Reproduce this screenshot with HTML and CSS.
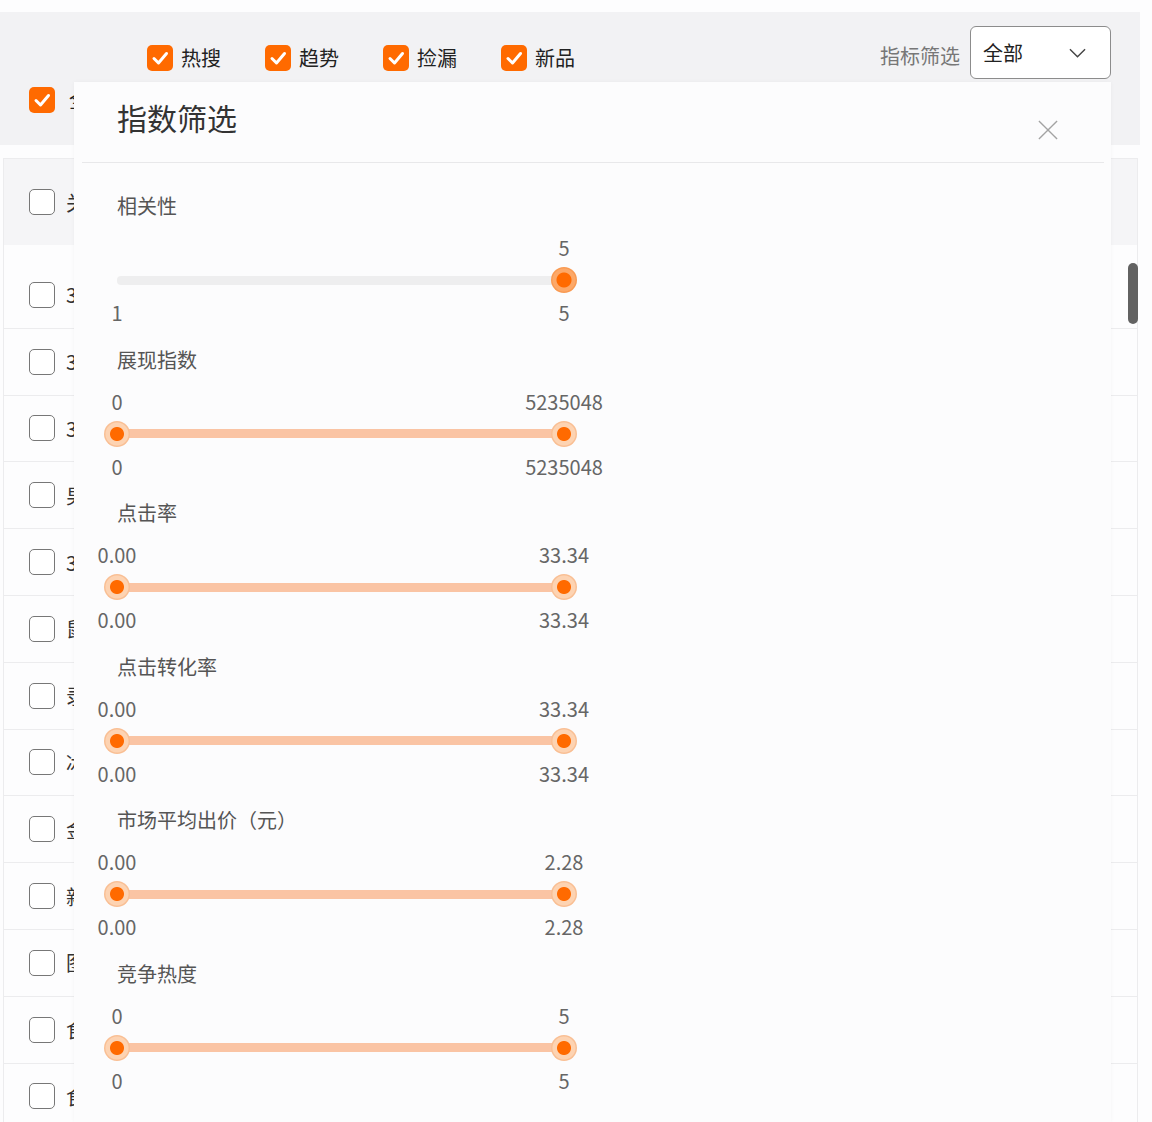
FILE: index.html
```html
<!DOCTYPE html>
<html lang="zh-CN">
<head>
    <meta charset="UTF-8">
    <meta name="viewport" content="width=device-width, initial-scale=1.0">
    <title>指数筛选</title>
    <link rel="stylesheet" href="styles.css">
</head>
<body>
    <div class="toolbar">
        <div class="toolbar-top">
            <div class="tag-group">
                <label class="tag"><span class="check on"><svg viewBox="0 0 26 26"><polyline points="7,13.5 11.5,18 19.5,8.5" /></svg></span>热搜</label>
                <label class="tag"><span class="check on"><svg viewBox="0 0 26 26"><polyline points="7,13.5 11.5,18 19.5,8.5" /></svg></span>趋势</label>
                <label class="tag"><span class="check on"><svg viewBox="0 0 26 26"><polyline points="7,13.5 11.5,18 19.5,8.5" /></svg></span>捡漏</label>
                <label class="tag"><span class="check on"><svg viewBox="0 0 26 26"><polyline points="7,13.5 11.5,18 19.5,8.5" /></svg></span>新品</label>
            </div>
            <div class="metric">
                <span class="metric-label">指标筛选</span>
                <div class="select">
                    <span>全部</span>
                    <svg class="chevron" viewBox="0 0 18 10"><polyline points="1,1 9,9 17,1" /></svg>
                </div>
            </div>
        </div>
        <label class="tag select-all"><span class="check on"><svg viewBox="0 0 26 26"><polyline points="7,13.5 11.5,18 19.5,8.5" /></svg></span><span class="cell">全</span></label>
    </div>

    <div class="table">
        <div class="table-head"><span class="check"></span><span class="cell">关</span></div>
        <div class="table-body">
            <div class="row"><span class="check"></span><span class="cell">3</span></div>
            <div class="row"><span class="check"></span><span class="cell">3</span></div>
            <div class="row"><span class="check"></span><span class="cell">3</span></div>
            <div class="row"><span class="check"></span><span class="cell">男</span></div>
            <div class="row"><span class="check"></span><span class="cell">3</span></div>
            <div class="row"><span class="check"></span><span class="cell">鼠</span></div>
            <div class="row"><span class="check"></span><span class="cell">录</span></div>
            <div class="row"><span class="check"></span><span class="cell">冰</span></div>
            <div class="row"><span class="check"></span><span class="cell">金</span></div>
            <div class="row"><span class="check"></span><span class="cell">新</span></div>
            <div class="row"><span class="check"></span><span class="cell">图</span></div>
            <div class="row"><span class="check"></span><span class="cell">食</span></div>
            <div class="row"><span class="check"></span><span class="cell">食</span></div>
        </div>
        <div class="scroll-thumb"></div>
    </div>

    <div class="modal">
        <div class="modal-head">
            <h2 class="modal-title">指数筛选</h2>
            <svg class="modal-close" viewBox="0 0 22 22"><line x1="1" y1="1" x2="21" y2="21" /><line x1="21" y1="1" x2="1" y2="21" /></svg>
        </div>
        <div class="modal-divider"></div>
        <div class="modal-body">
            <div class="filter">
                <div class="filter-name">相关性</div>
                <div class="values"><span></span><span>5</span></div>
                <div class="slider">
                    <div class="track"></div>
                    <span class="thumb thumb-max active"></span>
                </div>
                <div class="values"><span>1</span><span>5</span></div>
            </div>
            <div class="filter">
                <div class="filter-name">展现指数</div>
                <div class="values"><span>0</span><span>5235048</span></div>
                <div class="slider">
                    <div class="track fill"></div>
                    <span class="thumb thumb-min"></span>
                    <span class="thumb thumb-max"></span>
                </div>
                <div class="values"><span>0</span><span>5235048</span></div>
            </div>
            <div class="filter">
                <div class="filter-name">点击率</div>
                <div class="values"><span>0.00</span><span>33.34</span></div>
                <div class="slider">
                    <div class="track fill"></div>
                    <span class="thumb thumb-min"></span>
                    <span class="thumb thumb-max"></span>
                </div>
                <div class="values"><span>0.00</span><span>33.34</span></div>
            </div>
            <div class="filter">
                <div class="filter-name">点击转化率</div>
                <div class="values"><span>0.00</span><span>33.34</span></div>
                <div class="slider">
                    <div class="track fill"></div>
                    <span class="thumb thumb-min"></span>
                    <span class="thumb thumb-max"></span>
                </div>
                <div class="values"><span>0.00</span><span>33.34</span></div>
            </div>
            <div class="filter">
                <div class="filter-name">市场平均出价（元）</div>
                <div class="values"><span>0.00</span><span>2.28</span></div>
                <div class="slider">
                    <div class="track fill"></div>
                    <span class="thumb thumb-min"></span>
                    <span class="thumb thumb-max"></span>
                </div>
                <div class="values"><span>0.00</span><span>2.28</span></div>
            </div>
            <div class="filter">
                <div class="filter-name">竞争热度</div>
                <div class="values"><span>0</span><span>5</span></div>
                <div class="slider">
                    <div class="track fill"></div>
                    <span class="thumb thumb-min"></span>
                    <span class="thumb thumb-max"></span>
                </div>
                <div class="values"><span>0</span><span>5</span></div>
            </div>
        </div>
    </div>
</body>
</html>
```

FILE: styles.css
```css
body {
    width: 1152px;
    height: 1122px;
    margin: 0;
    overflow: hidden;
    position: relative;
    background-color: #fdfdfe;
    font-family: "Noto Sans CJK SC", "Noto Sans", sans-serif;
    color: #333;
}
.toolbar {
    margin-top: 12px;
    width: 1140px;
    height: 133px;
    box-sizing: border-box;
    padding: 14px 29px 0 0;
    background-color: #f2f2f4;
}
.toolbar-top {
    display: flex;
    align-items: flex-end;
    height: 53px;
}
.tag-group {
    display: flex;
    gap: 44px;
    margin-left: 147px;
    margin-bottom: 8px;
}
.tag {
    display: flex;
    align-items: center;
    gap: 8px;
    font-size: 20px;
    line-height: 26px;
    color: #222;
}
.select-all {
    margin: 8px 0 0 29px;
    gap: 14px;
}
.check {
    width: 26px;
    height: 26px;
    box-sizing: border-box;
    border: 1.5px solid #777;
    border-radius: 5px;
    background-color: #fff;
    flex-shrink: 0;
}
.check.on {
    border: none;
    background-color: #ff6a00;
}
.check svg {
    display: block;
    width: 26px;
    height: 26px;
    fill: none;
    stroke: #fff;
    stroke-width: 3;
    stroke-linecap: round;
    stroke-linejoin: round;
}
.metric {
    margin-left: auto;
    display: flex;
    align-items: flex-end;
    gap: 10px;
}
.metric-label {
    font-size: 20px;
    line-height: 24px;
    color: #777;
    margin-bottom: 11px;
}
.select {
    width: 141px;
    height: 53px;
    box-sizing: border-box;
    border: 1px solid #8c8c8c;
    border-radius: 6px;
    background-color: #fff;
    display: flex;
    align-items: center;
    padding: 0 24px 0 12px;
    font-size: 20px;
    color: #222;
}
.chevron {
    margin-left: auto;
    width: 17px;
    height: 10px;
    fill: none;
    stroke: #444;
    stroke-width: 1.5;
}
.table {
    position: relative;
    margin: 13px 0 0 3px;
    width: 1135px;
    box-sizing: border-box;
    border: 1px solid #ececee;
    border-bottom: none;
}
.table-head, .row {
    display: flex;
    align-items: center;
    gap: 11px;
    padding-left: 25px;
    font-size: 20px;
    color: #333;
}
.table-head {
    height: 86px;
    background-color: #f5f5f7;
}
.table-body {
    padding-top: 17px;
}
.row {
    height: 66.8px;
    box-sizing: border-box;
    border-bottom: 1px solid #ececee;
}
.scroll-thumb {
    position: absolute;
    left: 1124px;
    top: 104px;
    width: 10px;
    height: 61px;
    border-radius: 5px;
    background-color: #626262;
}
.modal {
    position: absolute;
    left: 74px;
    top: 82px;
    bottom: 0;
    width: 1037px;
    background-color: #fcfcfd;
    box-shadow: 0 0 4px rgba(0, 0, 0, 0.04);
}
.modal-head {
    height: 80px;
    display: flex;
    align-items: flex-start;
    padding: 0 53px 0 43px;
}
.modal-title {
    margin: 15px 0 0;
    font-size: 30px;
    line-height: 40px;
    font-weight: normal;
    color: #333;
}
.modal-close {
    margin: 38px 0 0 auto;
    width: 20px;
    height: 20px;
    stroke: #a3a3a3;
    stroke-width: 1.5;
}
.modal-divider {
    height: 1px;
    margin: 0 7px 0 8px;
    background-color: #e8e8ea;
}
.modal-body {
    padding: 31px 0 0 43px;
}
.filter {
    width: 447px;
    padding-bottom: 22.5px;
}
.filter-name {
    font-size: 20px;
    line-height: 24px;
    color: #555;
}
.values {
    display: flex;
    justify-content: space-between;
    margin-top: 8px;
    font-size: 20px;
    line-height: 24px;
    color: #666;
}
.filter-name + .values {
    margin-top: 18px;
}
.values span {
    width: 0;
    display: flex;
    justify-content: center;
    white-space: nowrap;
}
.slider {
    position: relative;
    height: 26px;
    margin-top: 7px;
    display: flex;
    align-items: center;
}
.track {
    width: 100%;
    height: 9px;
    border-radius: 4px;
    background-color: #eeeeef;
}
.track.fill {
    background-color: #fac4a4;
}
.thumb {
    position: absolute;
    top: 0;
    width: 26px;
    height: 26px;
    border-radius: 50%;
    background: radial-gradient(circle, #ff6a00 0 6.5px, #fdd3b2 7.5px 11px, #f9bf94 12px 13px);
}
.thumb.active {
    background: radial-gradient(circle, #ff6a00 0 7px, #fca868 8px 11px, #f99a52 12px 13px);
}
.thumb-min {
    left: -13px;
}
.thumb-max {
    right: -13px;
}
```
